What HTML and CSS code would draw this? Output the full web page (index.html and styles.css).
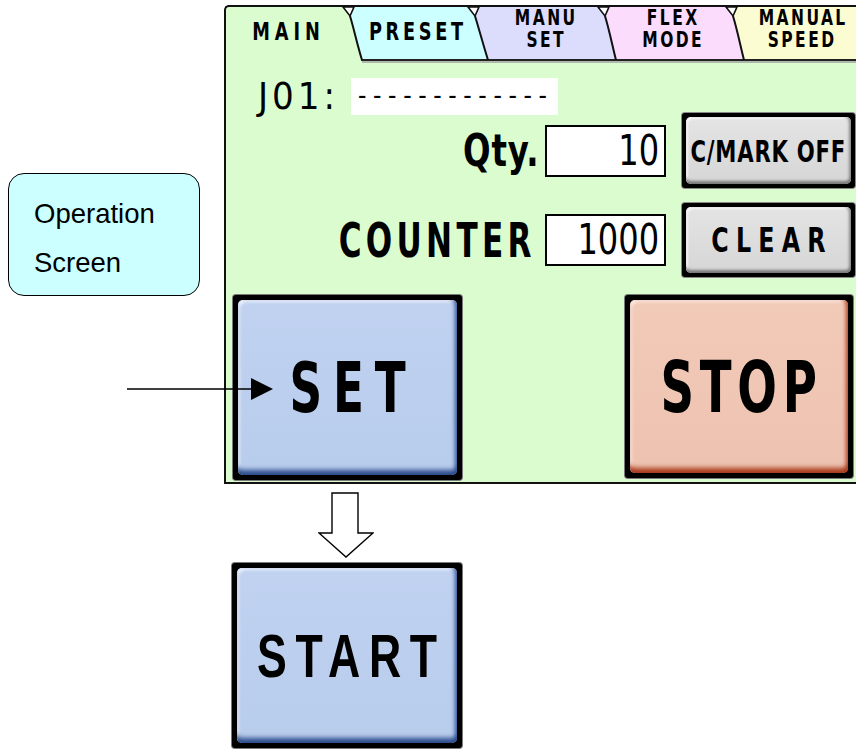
FILE: index.html
```html
<!DOCTYPE html>
<html>
<head>
<meta charset="utf-8">
<link rel="stylesheet" href="styles.css">
</head>
<body>
<div class="page">
  <div class="left">
    <div class="callout">
      <p>Operation</p>
      <p>Screen</p>
    </div>
  </div>

  <div class="right">
    <div class="panel">
      <div class="tabs">
        <svg class="tab-shapes" width="630" height="56" viewBox="0 0 630 56">
          <polygon points="122,0 247,0 262,53 136,53" fill="#ccffff"/>
          <polygon points="247,0 377,0 390,53 262,53" fill="#dcdcfc"/>
          <polygon points="377,0 505,0 518,53 390,53" fill="#fcdcfc"/>
          <polygon points="505,0 630,0 630,53 518,53" fill="#fcfcd2"/>
          <line x1="135" y1="53" x2="630" y2="53" stroke="#222" stroke-width="2"/>
          <line x1="136" y1="55" x2="630" y2="55" stroke="#a0a0a0" stroke-width="1.5"/>
          <g fill="#fff" stroke="#111" stroke-width="1.6">
            <polygon points="117,0 128,0 124,9"/>
            <polygon points="242,0 253,0 249,9"/>
            <polygon points="372,0 383,0 379,9"/>
            <polygon points="500,0 511,0 507,9"/>
          </g>
          <g fill="none" stroke="#111" stroke-width="2">
            <path d="M124 9 C 128 22, 131 37, 136 53"/>
            <path d="M249 9 C 253 22, 257 37, 262 53"/>
            <path d="M379 9 C 383 22, 386 37, 390 53"/>
            <path d="M507 9 C 511 22, 514 37, 518 53"/>
          </g>
        </svg>
        <div class="tab-labels">
          <span class="tab one main">MAIN</span>
          <span class="tab one preset">PRESET</span>
          <span class="tab two">MANU<br>SET</span>
          <span class="tab two">FLEX<br>MODE</span>
          <span class="tab two last">MANUAL<br>SPEED</span>
        </div>
      </div>

      <div class="job">
        <span class="job-label">J01:</span>
        <span class="job-field">-------------</span>
      </div>

      <div class="row qty-row">
        <span class="label qty-label">Qty.</span>
        <span class="numbox"><span class="num">10</span></span>
        <div class="smallbtn"><div class="face gray"><span class="cmark">C/MARK OFF</span></div></div>
      </div>

      <div class="row counter-row">
        <span class="label counter-label">COUNTER</span>
        <span class="numbox"><span class="num">1000</span></span>
        <div class="smallbtn"><div class="face gray"><span class="clear">CLEAR</span></div></div>
      </div>

      <div class="big-row">
        <div class="bigbtn"><div class="face blue"><span class="big set-text">SET</span></div></div>
        <div class="bigbtn stop"><div class="face salmon"><span class="big stop-text">STOP</span></div></div>
      </div>
    </div>

    <svg class="flow-arrow" width="56" height="67" viewBox="0 0 56 67">
      <polygon points="14,1 40,1 40,41 55,41 28,65 1,41 14,41" fill="#fff" stroke="#000" stroke-width="1.4" stroke-linejoin="miter"/>
    </svg>

    <div class="bigbtn start"><div class="face blue"><span class="big start-text">START</span></div></div>
  </div>

  <svg class="pointer" width="146" height="24" viewBox="0 0 146 24">
    <line x1="0" y1="12" x2="126" y2="12" stroke="#000" stroke-width="1.6"/>
    <polygon points="124,1 146,12 124,23" fill="#000"/>
  </svg>
</div>
</body>
</html>
```

FILE: styles.css
```css
* { box-sizing: border-box; margin: 0; padding: 0; }
html, body { width: 856px; height: 749px; overflow: hidden; background: #fff; }
body { font-family: "Liberation Sans", Arial, sans-serif; color: #000; }

.page { position: relative; display: flex; width: 856px; height: 749px; }

/* left column: callout */
.left { width: 224px; flex: none; padding: 173px 0 0 8px; }
.callout {
  width: 192px; height: 123px;
  border: 1px solid #000; border-radius: 16px;
  background: #ccffff;
  padding: 15px 0 0 25px;
  font-size: 27.5px; line-height: 49px;
}

/* right column */
.right { flex: 1; display: flex; flex-direction: column; padding-top: 5px; min-width: 0; }

.panel {
  width: 632px; height: 479px; flex: none;
  border: 2px solid #111; border-right: none;
  border-top-left-radius: 5px;
  background: #dbfccf;
  display: flex; flex-direction: column;
  font-family: "DejaVu Sans Condensed", "DejaVu Sans", sans-serif;
}

/* tabs */
.tabs { display: grid; height: 56px; flex: none; }
.tabs > * { grid-area: 1 / 1; }
.tab-shapes { display: block; }
.tab-labels {
  display: grid;
  grid-template-columns: 120px 140px 118px 136px 116px;
  font-weight: bold;
}
.tab { text-align: center; display: block; transform: scaleX(0.82); white-space: nowrap; }
.tab.one { font-size: 24px; line-height: 24px; padding-top: 13px; }
.tab.main { letter-spacing: 6px; padding-left: 6px; }
.tab.preset { letter-spacing: 4.5px; padding-left: 4.5px; }
.tab.two { font-size: 21px; line-height: 22px; padding-top: 0; letter-spacing: 3px; padding-left: 3px; }
.tab.last { padding-left: 10px; }

/* J01 */
.job { display: flex; align-items: center; height: 37px; margin: 15px 0 0 32px; }
.job-label { width: 93px; font-size: 38px; line-height: 37px; letter-spacing: 4px; }
.job-field {
  width: 207px; height: 37px; background: #fff;
  font-size: 26px; line-height: 34px; letter-spacing: 6.6px; padding-left: 7px;
  white-space: nowrap; overflow: hidden;
}

/* rows */
.row { display: flex; align-items: center; justify-content: flex-end; padding-right: 1px; }
.qty-row { height: 75px; margin-top: -2px; }
.counter-row { height: 74px; margin-top: 15px; }
.label { font-weight: bold; display: inline-block; transform-origin: right center; white-space: nowrap; }
.qty-label { font-size: 45px; letter-spacing: 1px; transform: scaleX(0.8); margin-right: 6px; }
.counter-label { font-size: 48px; letter-spacing: 6px; transform: scaleX(0.72); margin-right: 9px; }
.numbox {
  width: 121px; height: 52px;
  border: 2px solid #000; background: #fff;
  text-align: right; padding-right: 5px;
  font-size: 42px; line-height: 48px;
  margin-right: 16px;
}
.num { display: inline-block; transform: scaleX(0.85); transform-origin: right center; }

.smallbtn {
  width: 173px; height: 100%;
  border: 4px solid #000; border-radius: 3px;
  box-shadow: 0 0 0 1px #8a8a8a;
  background: #000;
}
.face {
  width: 100%; height: 100%;
  border-radius: 5px;
  display: flex; align-items: center; justify-content: center;
  font-weight: bold;
}
.face.gray {
  background: linear-gradient(#e4e4e4, #d6d6d6);
  box-shadow: inset 0 -4px 3px -1px #7a7a7a, inset -3px 0 3px -1px #8a8a8a, inset 2px 2px 2px #fafafa;
}
.cmark { font-size: 31px; letter-spacing: 1px; white-space: nowrap; transform: scaleX(0.76); }
.clear { font-size: 33px; letter-spacing: 9px; padding-left: 9px; transform: scaleX(0.8); }

/* big buttons */
.big-row {
  display: flex; justify-content: space-between;
  margin-top: 18px; padding: 0 3px 0 7px;
  height: 185px;
}
.bigbtn {
  width: 229px; height: 185px;
  border: 5px solid #000; border-radius: 3px;
  box-shadow: 0 0 0 1px #7a7a7a;
  background: #000;
}
.bigbtn.stop { width: 228px; height: 183px; }
.face.blue {
  background: linear-gradient(#c0d2f0, #b8ccec);
  box-shadow: inset 0 -7px 5px -2px #2c4c8c, inset -4px 0 4px -2px #3a5ca0, inset 3px 3px 3px -1px #f4f8ff;
}
.face.salmon {
  background: linear-gradient(#f2cab8, #eec2b0);
  box-shadow: inset 0 -7px 5px -2px #a83a1c, inset -4px 0 4px -2px #b44a2c, inset 3px 3px 3px -1px #fff0ea;
}
.big { font-size: 70px; line-height: 1; white-space: nowrap; transform: scaleX(0.72); }
.set-text { letter-spacing: 15px; padding-left: 15px; }
.stop-text { font-size: 72px; letter-spacing: 8px; padding-left: 8px; }
.start-text { font-size: 62px; letter-spacing: 12px; padding-left: 12px; }

.flow-arrow { display: block; margin: 8px 0 0 94px; flex: none; }
.bigbtn.start { width: 230px; height: 185px; margin: 4px 0 0 8px; flex: none; }

/* pointer arrow overlaying the SET button */
.pointer { position: absolute; left: 127px; top: 377px; }
```
